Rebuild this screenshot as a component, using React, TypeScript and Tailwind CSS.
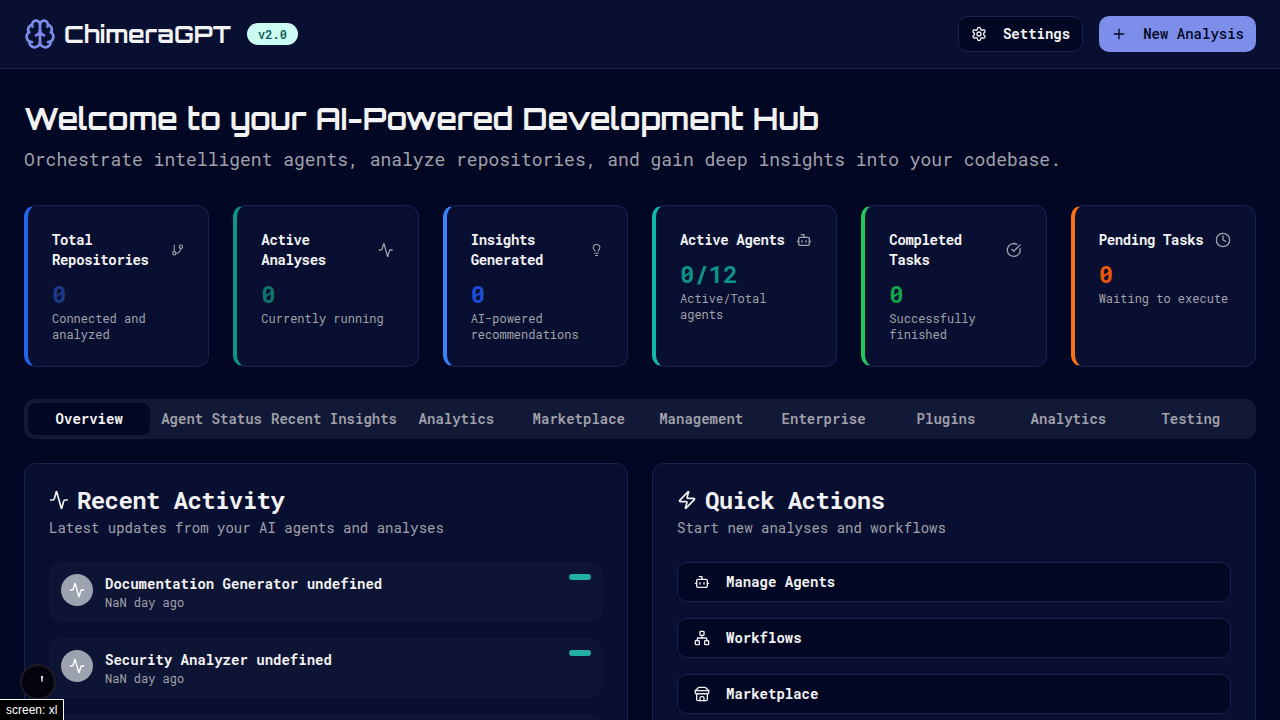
import type { ReactNode } from "react";
import {
  Activity,
  Bot,
  Brain,
  CircleCheckBig,
  Clock,
  GitBranch,
  Lightbulb,
  Network,
  Plus,
  Zap,
} from "lucide-react";

type IconType = (props: { className?: string }) => ReactNode;

type Stat = {
  title: string;
  value: string;
  note: string;
  icon: IconType | typeof Bot;
  edge: string;
  tone: string;
};

const stats: Stat[] = [
  { title: "Total Repositories", value: "0", note: "Connected and analyzed", icon: GitBranch, edge: "border-l-[#2563eb]", tone: "text-[#1e3a8a]" },
  { title: "Active Analyses", value: "0", note: "Currently running", icon: Activity, edge: "border-l-[#0d9488]", tone: "text-[#0f766e]" },
  { title: "Insights Generated", value: "0", note: "AI-powered recommendations", icon: Lightbulb, edge: "border-l-[#3b82f6]", tone: "text-[#1d4ed8]" },
  { title: "Active Agents", value: "0/12", note: "Active/Total agents", icon: Bot, edge: "border-l-[#14b8a6]", tone: "text-[#0d9488]" },
  { title: "Completed Tasks", value: "0", note: "Successfully finished", icon: CircleCheckBig, edge: "border-l-[#22c55e]", tone: "text-[#16a34a]" },
  { title: "Pending Tasks", value: "0", note: "Waiting to execute", icon: Clock, edge: "border-l-[#f97316]", tone: "text-[#ea580c]" },
];

const tabs = ["Overview", "Agent Status", "Recent Insights", "Analytics", "Marketplace", "Management", "Enterprise", "Plugins", "Analytics", "Testing"];

const activity = ["Documentation Generator undefined", "Security Analyzer undefined"];

function SettingsIcon() {
  return (
    <svg className="mr-2 size-4" viewBox="0 0 24 24" fill="none" stroke="currentColor" strokeWidth="2" strokeLinecap="round" strokeLinejoin="round">
      <path d="M12.22 2h-.44a2 2 0 0 0-2 2v.18a2 2 0 0 1-1 1.73l-.43.25a2 2 0 0 1-2 0l-.15-.08a2 2 0 0 0-2.73.73l-.22.38a2 2 0 0 0 .73 2.73l.15.1a2 2 0 0 1 1 1.72v.51a2 2 0 0 1-1 1.74l-.15.09a2 2 0 0 0-.73 2.73l.22.38a2 2 0 0 0 2.73.73l.15-.08a2 2 0 0 1 2 0l.43.25a2 2 0 0 1 1 1.73V20a2 2 0 0 0 2 2h.44a2 2 0 0 0 2-2v-.18a2 2 0 0 1 1-1.73l.43-.25a2 2 0 0 1 2 0l.15.08a2 2 0 0 0 2.73-.73l.22-.39a2 2 0 0 0-.73-2.73l-.15-.08a2 2 0 0 1-1-1.74v-.5a2 2 0 0 1 1-1.74l.15-.09a2 2 0 0 0 .73-2.73l-.22-.38a2 2 0 0 0-2.73-.73l-.15.08a2 2 0 0 1-2 0l-.43-.25a2 2 0 0 1-1-1.73V4a2 2 0 0 0-2-2z" />
      <circle cx="12" cy="12" r="3" />
    </svg>
  );
}

function StoreIcon({ className }: { className?: string }) {
  return (
    <svg className={className} viewBox="0 0 24 24" fill="none" stroke="currentColor" strokeWidth="2" strokeLinecap="round" strokeLinejoin="round">
      <path d="m2 7 4.41-4.41A2 2 0 0 1 7.83 2h8.34a2 2 0 0 1 1.42.59L22 7" />
      <path d="M4 12v8a2 2 0 0 0 2 2h12a2 2 0 0 0 2-2v-8" />
      <path d="M15 22v-4a2 2 0 0 0-2-2h-2a2 2 0 0 0-2 2v4" />
      <path d="M2 7h20" />
      <path d="M22 7v3a2 2 0 0 1-2 2a2.7 2.7 0 0 1-1.59-.63.7.7 0 0 0-.82 0A2.7 2.7 0 0 1 16 12a2.7 2.7 0 0 1-1.59-.63.7.7 0 0 0-.82 0A2.7 2.7 0 0 1 12 12a2.7 2.7 0 0 1-1.59-.63.7.7 0 0 0-.82 0A2.7 2.7 0 0 1 8 12a2.7 2.7 0 0 1-1.59-.63.7.7 0 0 0-.82 0A2.7 2.7 0 0 1 4 12a2 2 0 0 1-2-2V7" />
    </svg>
  );
}

const actions: { label: string; icon: IconType | typeof Bot }[] = [
  { label: "Manage Agents", icon: Bot },
  { label: "Workflows", icon: Network },
  { label: "Marketplace", icon: StoreIcon },
];

function Panel({ title, description, icon: Icon, children }: { title: string; description: string; icon: typeof Bot; children: ReactNode }) {
  return (
    <section className="rounded-xl border border-[#1a2350] bg-[#090f31] p-6">
      <div className="flex flex-col gap-1.5">
        <h3 className="flex items-center gap-2 text-2xl leading-none font-bold tracking-tight">
          <Icon className="size-5" />
          {title}
        </h3>
        <p className="text-sm text-[#a1a1aa]">{description}</p>
      </div>
      <div className="mt-6 flex flex-col gap-4">{children}</div>
    </section>
  );
}

export default function App() {
  return (
    <div className="h-[720px] overflow-hidden bg-[#020724] font-['Roboto_Mono','Liberation_Mono',monospace] text-[#f2f2f2]">
      <header className="flex items-center justify-between border-b border-[#1a2350] bg-[#090f31] px-6 py-4">
        <div className="flex items-center gap-4">
          <div className="flex items-center gap-2">
            <Brain className="size-8 text-[#7c8cec]" />
            <h1 className="font-['Orbitron','DejaVu_Sans',sans-serif] text-2xl font-bold whitespace-nowrap">ChimeraGPT</h1>
          </div>
          <span className="rounded-full border border-transparent bg-[#ccfbf1] px-2.5 py-0.5 text-xs font-semibold text-[#115e59]">v2.0</span>
        </div>
        <div className="flex items-center gap-4">
          <button className="flex h-9 items-center gap-2 rounded-[10px] border border-[#1a2350] bg-[#020724] px-3 text-sm font-bold">
            <SettingsIcon />
            Settings
          </button>
          <button className="flex h-9 items-center gap-2 rounded-[10px] bg-[#7c8eea] px-3 text-sm font-medium text-[#020724]">
            <Plus className="mr-2 size-4" />
            New Analysis
          </button>
        </div>
      </header>

      <main className="px-6 py-8">
        <h2 className="mb-2 font-['Orbitron','DejaVu_Sans',sans-serif] text-3xl font-bold whitespace-nowrap">Welcome to your AI-Powered Development Hub</h2>
        <p className="text-lg text-[#a1a1aa]">Orchestrate intelligent agents, analyze repositories, and gain deep insights into your codebase.</p>

        <div className="mt-8 grid grid-cols-6 gap-6">
          {stats.map(({ title, value, note, icon: Icon, edge, tone }) => (
            <div key={title} className={`rounded-xl border border-l-4 border-y-[#1a2350] border-r-[#1a2350] bg-[#090f31] p-6 ${edge}`}>
              <div className="flex items-center justify-between pb-2">
                <h3 className="text-sm font-bold tracking-tight">{title}</h3>
                <Icon className="size-4 text-[#a1a1aa]" />
              </div>
              <div className={`text-2xl font-bold ${tone}`}>{value}</div>
              <p className="text-xs text-[#a1a1aa]">{note}</p>
            </div>
          ))}
        </div>

        <div className="mt-8 grid h-10 grid-cols-10 rounded-[10px] bg-[#121937] p-1 text-sm font-semibold text-[#a1a1aa]">
          {tabs.map((tab, i) => (
            <button
              key={i}
              className={i === 0 ? "flex items-center justify-center rounded-lg bg-[#020724] font-bold text-[#f2f2f2]" : "flex items-center justify-center whitespace-nowrap"}
            >
              {tab}
            </button>
          ))}
        </div>

        <div className="mt-6 grid grid-cols-2 gap-6">
          <Panel title="Recent Activity" description="Latest updates from your AI agents and analyses" icon={Activity}>
            {activity.map((name) => (
              <div key={name} className="flex items-start gap-3 rounded-xl bg-[#0e1434] p-3">
                <div className="flex size-8 items-center justify-center rounded-full bg-[#9ca3af]">
                  <Activity className="size-4 text-white" />
                </div>
                <div className="flex-1">
                  <p className="text-sm font-bold">{name}</p>
                  <p className="text-xs text-[#a1a1aa]">NaN day ago</p>
                </div>
                <span className="h-1.5 w-[22px] rounded-full bg-[#22b0a2]" />
              </div>
            ))}
            <div className="h-[60px] rounded-xl bg-[#0e1434]" />
          </Panel>
          <Panel title="Quick Actions" description="Start new analyses and workflows" icon={Zap}>
            {actions.map(({ label, icon: Icon }) => (
              <button key={label} className="flex h-10 items-center gap-4 rounded-[10px] border border-[#1a2350] bg-[#020724] px-4 text-sm font-bold">
                <Icon className="size-4" />
                {label}
              </button>
            ))}
          </Panel>
        </div>
      </main>

      <div className="fixed bottom-[20px] left-5 size-9 rounded-full border-2 border-[#1c1d24] bg-[#02030c]">
        <span className="absolute top-[10px] left-[19px] h-[6px] w-[2px] bg-linear-to-b from-white to-[#777]" />
      </div>
      <div className="fixed bottom-0 left-0 h-[21px] w-16 border-t border-r border-white bg-black pl-[6px] font-['Liberation_Sans',sans-serif] text-xs leading-[21px] whitespace-nowrap text-white">screen: xl</div>
    </div>
  );
}
